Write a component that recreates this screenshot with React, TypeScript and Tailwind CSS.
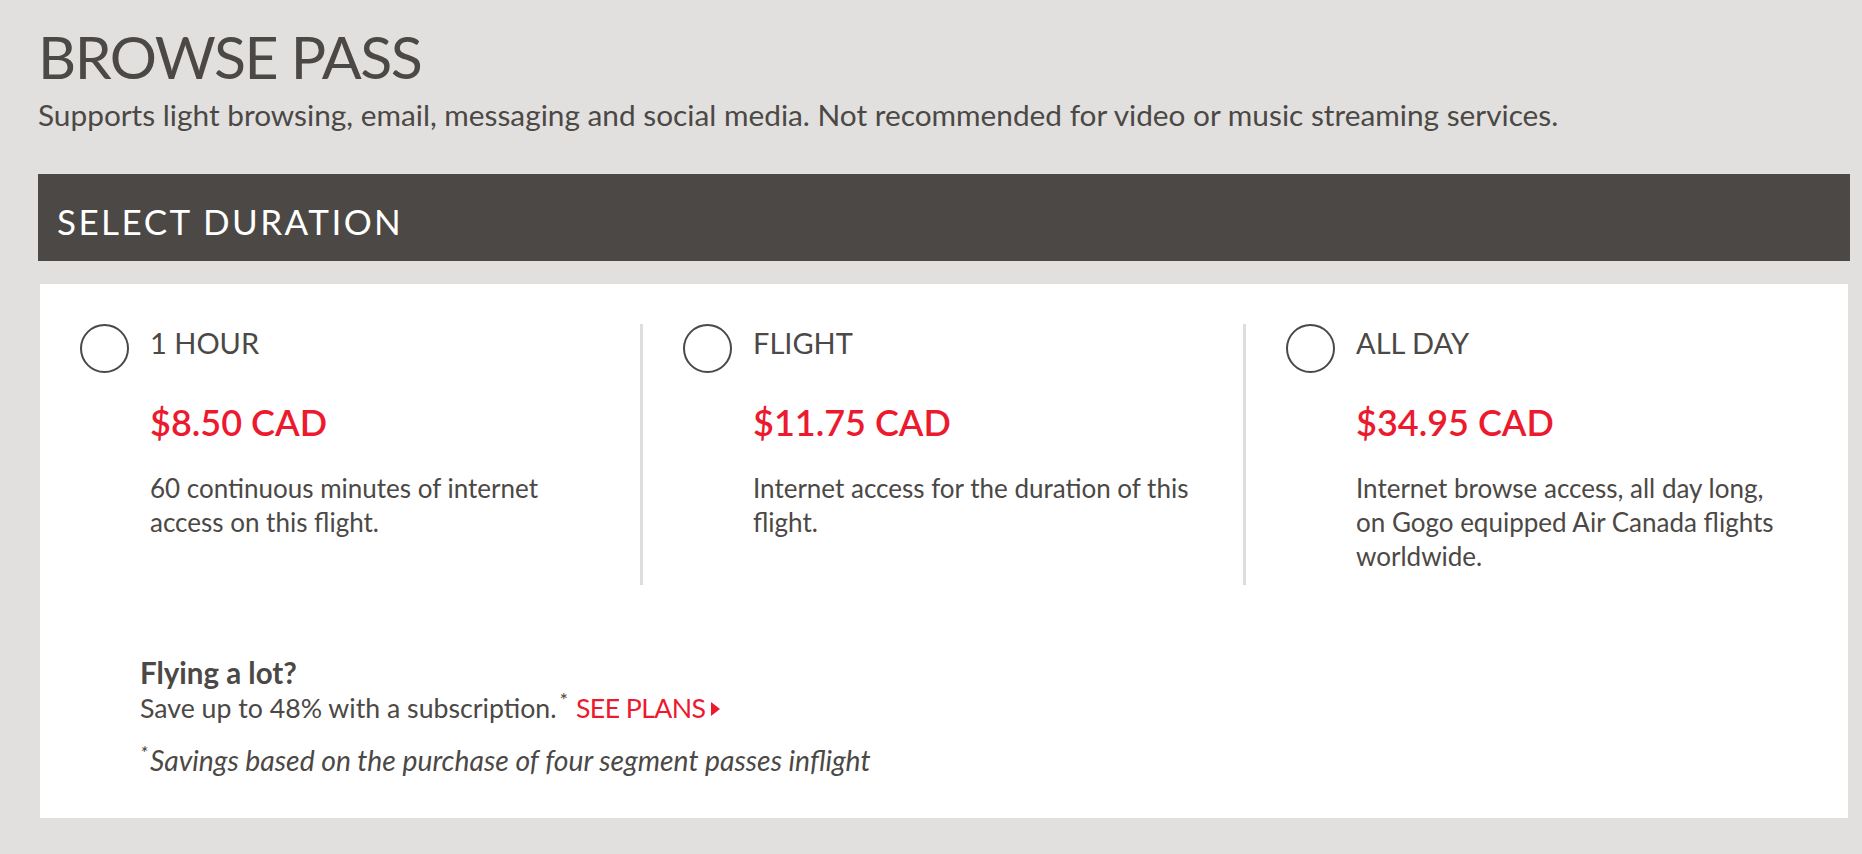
import React from "react";

const options = [
  {
    label: "1 HOUR",
    price: "$8.50 CAD",
    desc: "60 continuous minutes of internet access on this flight.",
  },
  {
    label: "FLIGHT",
    price: "$11.75 CAD",
    desc: "Internet access for the duration of this flight.",
  },
  {
    label: "ALL DAY",
    price: "$34.95 CAD",
    desc: "Internet browse access, all day long, on Gogo equipped Air Canada flights worldwide.",
  },
];

export default function App() {
  return (
    <div className="min-h-screen bg-[#e1e0de] font-['Lato',_'Liberation_Sans',_sans-serif] text-[#4b4845] pl-[38px] pr-[12px] pt-[27px] pb-[40px]">
      <h1 className="text-[59px] leading-[60px] tracking-[-1.5px] font-normal m-0">BROWSE PASS</h1>
      <p className="mt-[11px] text-[29.8px] leading-[34px]">
        Supports light browsing, email, messaging and social media. Not recommended for video or music streaming services.
      </p>
      <div className="mt-[42px] h-[87px] bg-[#4b4845] pt-[30px] pl-[19px]">
        <h2 className="text-white text-[35px] leading-[35px] tracking-[0.07em] font-normal">SELECT DURATION</h2>
      </div>
      <div className="mt-[23px] mx-[2px] bg-white pt-[40px] pb-[38px]">
        <div className="grid grid-cols-[600px_603px_1fr]">
          {options.map((o, i) => (
            <div
              key={o.label}
              className={
                "h-[261px] pl-[40px] pr-[40px] flex gap-[21px] " +
                (i > 0 ? "border-l-[3px] border-[#dedddc]" : "")
              }
            >
              <div className="w-[49px] h-[49px] rounded-full border-2 border-[#4b4845] shrink-0" />
              <div className="pt-[1px]">
                <div className="text-[29px] leading-[36px]">{o.label}</div>
                <div className="mt-[39px] text-[36px] leading-[44px] font-semibold text-[#ec1a2e]">{o.price}</div>
                <div className="mt-[27px] text-[26px] leading-[34px] max-w-[440px]">{o.desc}</div>
              </div>
            </div>
          ))}
        </div>
        <div className="pl-[100px] mt-[70px]">
          <div className="text-[29.5px] leading-[36px] font-bold">Flying a lot?</div>
          <div className="text-[26.7px] leading-[34px] flex items-baseline">
            <span>Save up to 48% with a subscription.</span>
            <span className="text-[20px] relative top-[-11px] ml-[3px]">*</span>
            <span className="ml-[8px] text-[#ec1a2e] tracking-[-0.6px]">SEE PLANS</span>
            <svg className="ml-[6px] self-center" width="9" height="14" viewBox="0 0 9 14">
              <path d="M0 0 L9 7 L0 14 Z" fill="#ec1a2e" />
            </svg>
          </div>
          <div className="mt-[16px] text-[28.3px] leading-[34px] italic">
            <span className="text-[20px] relative top-[-11px] mr-[2px]">*</span>
            Savings based on the purchase of four segment passes inflight
          </div>
        </div>
      </div>
    </div>
  );
}
